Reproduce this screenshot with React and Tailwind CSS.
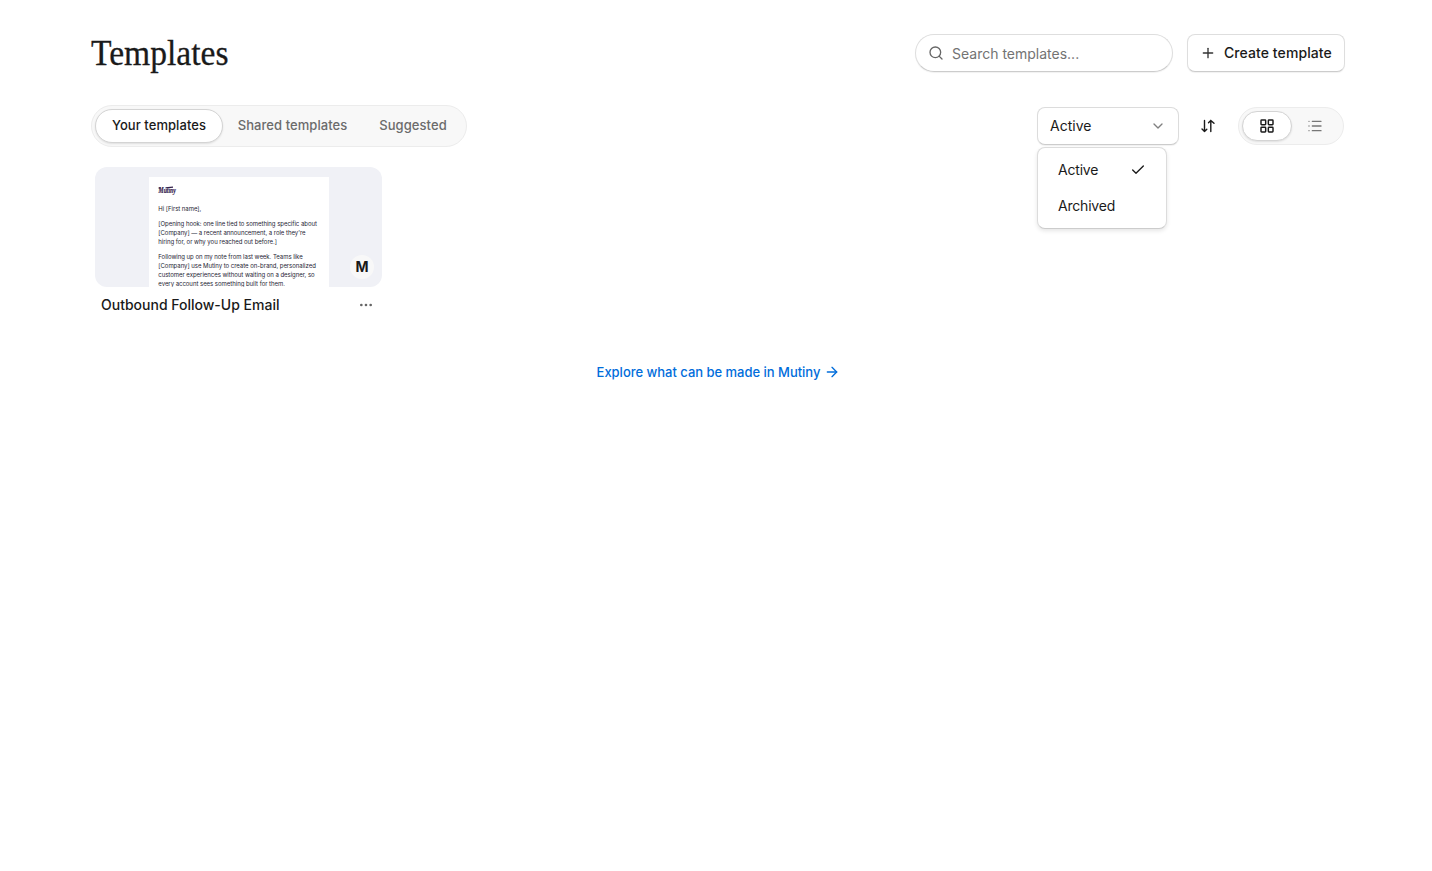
import React from "react";
import { Search, Plus, ChevronDown, Check, LayoutGrid, List, ArrowRight, Ellipsis } from "lucide-react";

function SortIcon() {
  return (
    <svg width="16" height="16" viewBox="0 0 16 16" fill="none" stroke="#1a1a1a" strokeWidth="1.4" strokeLinecap="round" strokeLinejoin="round">
      <path d="M4.5 2.5v11M2 11l2.5 2.5L6.8 11.2M10.8 13.5v-11M8.5 4.8l2.3-2.3L14 5.3" />
    </svg>
  );
}

function Header() {
  return (
    <header className="flex h-[38px] items-center">
      <h1 className="w-[200px] origin-left scale-x-[0.933] font-['Liberation_Serif',serif] text-[36px] leading-[38px] text-[#1a1a1a] [-webkit-text-stroke:0.3px_#1a1a1a]">
        Templates
      </h1>
      <div className="ml-auto flex h-[38px] w-[258px] items-center rounded-full border border-[#dedede] border-b-[#cccccc] bg-white pl-3 shadow-[0_1px_1px_rgba(0,0,0,0.06)]">
        <Search size={16} strokeWidth={2} color="#666666" />
        <span className="ml-2 text-[14px] text-[#737373]">Search templates...</span>
      </div>
      <button className="ml-[14px] flex h-[38px] w-[158px] items-center rounded-lg border border-[#dedede] border-b-[#cccccc] bg-white pl-3 shadow-[0_1px_1px_rgba(0,0,0,0.06)]">
        <Plus size={16} strokeWidth={2} color="#333333" />
        <span className="ml-2 whitespace-nowrap pb-[2px] text-[14px] font-medium tracking-[0.08px]">Create template</span>
      </button>
    </header>
  );
}

function StatusSelect() {
  return (
    <div className="relative">
      <button className="flex h-[38px] w-[142px] items-center justify-between rounded-lg border border-[#dcdcdc] border-b-[#cccccc] bg-white px-3 shadow-[0_1px_1px_rgba(0,0,0,0.06)]">
        <span className="pb-[2px] text-[14px]">Active</span>
        <ChevronDown size={16} strokeWidth={2} color="#808080" />
      </button>
      <div className="absolute left-0 top-[40px] flex h-[82px] w-[130px] flex-col rounded-lg border border-[#dcdcdc] border-b-[#cccccc] bg-white p-1 shadow-[0_2px_4px_rgba(0,0,0,0.1)]">
        <div className="flex h-9 items-center justify-between px-4 text-[14px] tracking-[-0.2px]">
          <span className="pb-[2px]">Active</span>
          <Check size={16} strokeWidth={2} color="#1a1a1a" />
        </div>
        <div className="flex h-9 items-center pb-[2px] pl-4 text-[14px] tracking-[-0.2px]">Archived</div>
      </div>
    </div>
  );
}

function Toolbar() {
  return (
    <div className="mt-[33px] flex h-[42px] items-center">
      <nav className="flex h-[42px] w-[376px] items-center rounded-full border border-[#ececec] bg-[#f8f8f8] p-[3px] text-[13px] font-medium tracking-[0.06px] text-[#6b6b6b]">
        <span className="flex h-[34px] w-[128px] items-center justify-center rounded-full border border-[#d4d4d4] bg-white text-[#1a1a1a] shadow-[0_1px_2px_rgba(0,0,0,0.1)]">Your templates</span>
        <span className="flex h-[34px] w-[139px] items-center justify-center">Shared templates</span>
        <span className="flex h-[34px] flex-1 items-center justify-center pl-px">Suggested</span>
      </nav>
      <div className="ml-auto flex items-center">
        <StatusSelect />
        <button className="ml-[21px] flex size-4 items-center justify-center"><SortIcon /></button>
        <div className="ml-[22px] mr-px flex h-[38px] w-[106px] items-center rounded-full border border-[#ececec] bg-[#f8f8f8] p-[3px]">
          <span className="flex h-[30px] w-[50px] items-center justify-center rounded-full border border-[#d4d4d4] bg-white shadow-[0_1px_2px_rgba(0,0,0,0.1)]">
            <LayoutGrid size={16} strokeWidth={2.2} color="#1a1a1a" />
          </span>
          <span className="flex h-[30px] flex-1 items-center justify-center pr-[2px]">
            <List size={16} strokeWidth={2} color="#777777" />
          </span>
        </div>
      </div>
    </div>
  );
}

function MutinyLogo() {
  return (
    <svg width="60" height="34" viewBox="0 0 60 34" className="block overflow-visible">
      <text x="1" y="26" fontFamily="Liberation Serif, serif" fontSize="24" fontWeight="700" fontStyle="italic" fill="#33204a" stroke="#33204a" strokeWidth="0.6" textLength="57" lengthAdjust="spacingAndGlyphs">Mutiny</text>
      <path d="M1 8 8 7M24 7 49 5" stroke="#33204a" strokeWidth="4" />
    </svg>
  );
}

function EmailPreview() {
  return (
    <div className="h-[110px] w-[180px] overflow-hidden bg-white">
      <div className="flex w-[600px] origin-top-left scale-[0.3] flex-col gap-5 pl-[31px] pt-[29px] text-[20px] leading-[30px] tracking-[-0.1px] text-[#1e2433]">
        <div className="mb-[7px] h-[34px]"><MutinyLogo /></div>
        <p className="whitespace-nowrap">Hi [First name],</p>
        <p className="whitespace-nowrap">[Opening hook: one line tied to something specific about<br />[Company] — a recent announcement, a role they're<br />hiring for, or why you reached out before.]</p>
        <p className="whitespace-nowrap">Following up on my note from last week. Teams like<br />[Company] use Mutiny to create on-brand, personalized<br />customer experiences without waiting on a designer, so<br />every account sees something built for them.</p>
      </div>
    </div>
  );
}

function TemplateCard() {
  return (
    <article className="ml-1 mt-5 w-[287px]">
      <div className="relative flex h-[120px] justify-center overflow-hidden rounded-xl bg-[#f0f1f6] pt-[10px]">
        <EmailPreview />
        <span className="absolute bottom-2 right-2 flex size-6 items-center justify-center rounded-full bg-[#f8f8f8] pb-px text-[14px] font-bold">M</span>
      </div>
      <div className="flex h-9 items-center justify-between pl-[6px] pr-2">
        <h2 className="pb-[2px] text-[14px] font-medium">Outbound Follow-Up Email</h2>
        <Ellipsis size={16} strokeWidth={2} color="#666666" />
      </div>
    </article>
  );
}

export default function App() {
  return (
    <main className="min-h-[871px] bg-white pl-[91px] pr-[87px] pt-[34px] font-['Inter',sans-serif] text-[#1a1a1a]">
      <Header />
      <Toolbar />
      <TemplateCard />
      <a className="mt-[39px] flex h-5 items-center justify-center gap-1 pl-px text-[13px] font-medium tracking-[-0.02px] text-[#006ddb]">
        <span className="pt-[2px]">Explore what can be made in Mutiny</span>
        <ArrowRight size={16} strokeWidth={2} />
      </a>
    </main>
  );
}
